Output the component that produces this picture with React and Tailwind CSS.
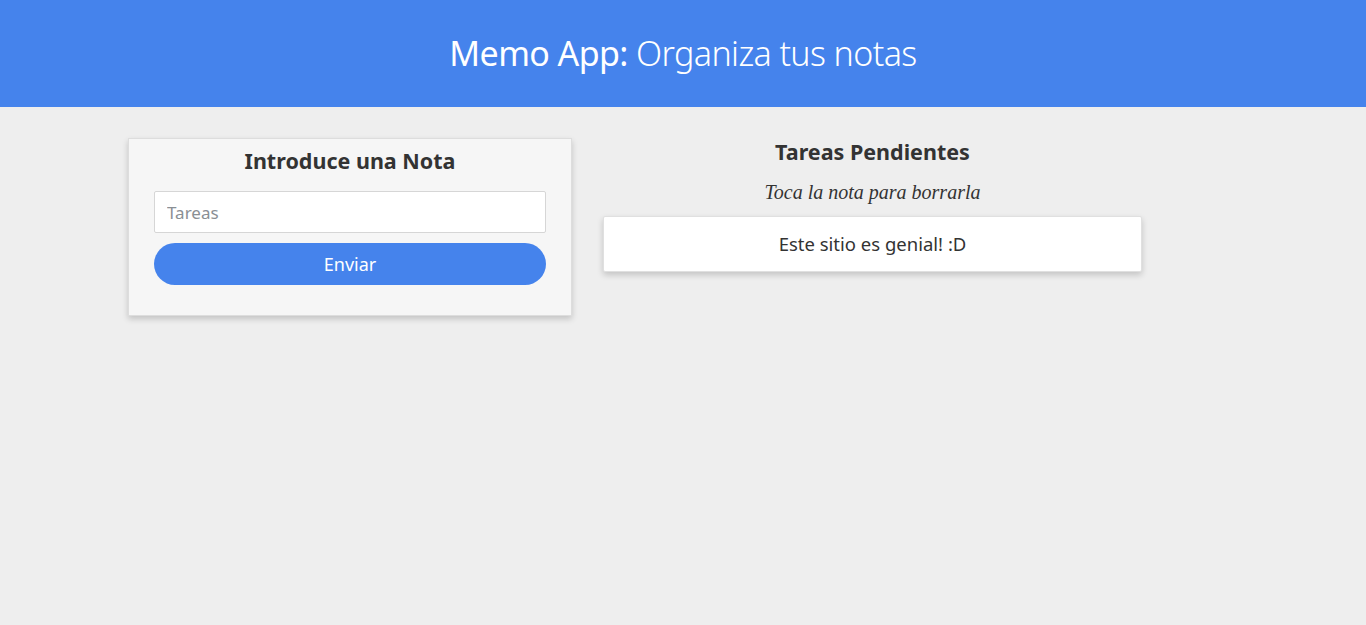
import React, { useState } from 'react';

const App = () => {
  const [notes, setNotes] = useState(['Este sitio es genial! :D']);
  const [text, setText] = useState('');

  const addNote = () => {
    if (!text.trim()) return;
    setNotes([...notes, text]);
    setText('');
  };

  return (
    <div className="min-h-[625px] bg-[#eeeeee] text-[#333333] font-['Noto_Sans',sans-serif]">
      <header className="h-[107px] bg-[#4583ec] flex items-center justify-center">
        <h1 className="text-[34px] text-white font-light tracking-[-0.6px]">
          <span className="font-normal">Memo App:</span> Organiza tus notas
        </h1>
      </header>

      <main className="flex items-start gap-[31px] pl-[128px] pt-[31px]">
        <section className="w-[444px] bg-[#f6f6f6] border border-[#dddddd] shadow-[0_3px_6px_rgba(0,0,0,0.18)] px-[25px] pt-[7px] pb-[30px]">
          <h2 className="text-center text-[21.5px] font-bold leading-[30px] mb-[15px]">Introduce una Nota</h2>
          <input
            value={text}
            onChange={(e) => setText(e.target.value)}
            placeholder="Tareas"
            className="w-full h-[42px] bg-white border border-[#d6d6d6] rounded-[2px] px-[12px] text-[17px] placeholder:text-[#8a8f94] outline-none"
          />
          <button
            onClick={addNote}
            className="mt-[10px] w-full h-[42px] rounded-full bg-[#4583ec] text-white text-[18px]"
          >
            Enviar
          </button>
        </section>

        <section className="w-[539px]">
          <h2 className="text-center text-[21.5px] font-bold leading-[30px] mt-[-1px]">Tareas Pendientes</h2>
          <p className="text-center italic text-[20px] font-['Liberation_Serif',serif] mt-[14px] leading-[22px]">Toca la nota para borrarla</p>
          <ul className="mt-[13px] flex flex-col gap-[10px]">
            {notes.map((n, i) => (
              <li
                key={i}
                onClick={() => setNotes(notes.filter((_, j) => j !== i))}
                className="h-[56px] bg-white border border-[#e0e0e0] rounded-[2px] shadow-[0_3px_6px_rgba(0,0,0,0.18)] flex items-center justify-center text-[18.5px] cursor-pointer"
              >
                {n}
              </li>
            ))}
          </ul>
        </section>
      </main>
    </div>
  );
};

export default App;
